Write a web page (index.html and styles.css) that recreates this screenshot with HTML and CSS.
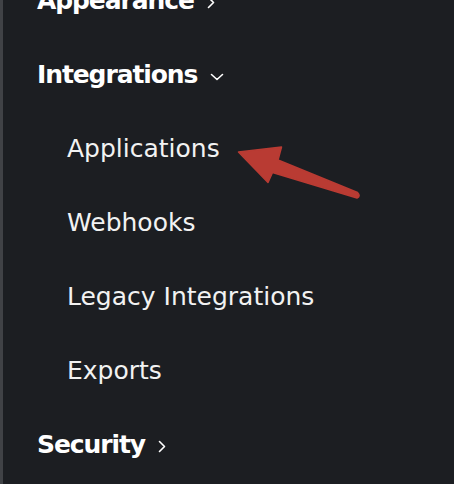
FILE: index.html
```html
<!DOCTYPE html>
<html lang="en">
<head>
<meta charset="utf-8">
<title>Settings navigation</title>
<link rel="stylesheet" href="styles.css">
</head>
<body>
<nav class="sidebar">
  <ul class="menu">
    <li class="item group">Appearance
      <svg class="chev-right" width="8" height="13" viewBox="0 0 8 13"><path d="M1.5 1.5 L6.5 6.5 L1.5 11.5" fill="none" stroke="#fff" stroke-width="1.6" stroke-linecap="round" stroke-linejoin="round"/></svg>
    </li>
    <li class="item group">Integrations
      <svg class="chev-down" width="14" height="8" viewBox="0 0 14 8"><path d="M1.5 1.5 L7 6.5 L12.5 1.5" fill="none" stroke="#fff" stroke-width="1.6" stroke-linecap="round" stroke-linejoin="round"/></svg>
    </li>
    <li class="item sub">Applications</li>
    <li class="item sub">Webhooks</li>
    <li class="item sub">Legacy Integrations</li>
    <li class="item sub">Exports</li>
    <li class="item group">Security
      <svg class="chev-right" width="8" height="13" viewBox="0 0 8 13"><path d="M1.5 1.5 L6.5 6.5 L1.5 11.5" fill="none" stroke="#fff" stroke-width="1.6" stroke-linecap="round" stroke-linejoin="round"/></svg>
    </li>
  </ul>
  <svg class="arrow" width="454" height="484" viewBox="0 0 454 484">
    <path d="M238.5 152 L281.5 147 L278 160 L357.5 192.5 Q361 196 357 198 L272.5 172.5 L268 182.5 Z" fill="#b93b33" stroke="#b93b33" stroke-width="1.5" stroke-linejoin="round"/>
  </svg>
</nav>
</body>
</html>
```
FILE: styles.css
```css
html, body {
  margin: 0;
  padding: 0;
  height: 100%;
  overflow: hidden;
  background: #1c1e22;
}
.sidebar {
  position: relative;
  display: flow-root;
  height: 100%;
  border-left: 3px solid #404246;
  box-sizing: border-box;
}
.menu {
  list-style: none;
  margin: -36px 0 0 0;
  padding: 0 0 0 34px;
  font-family: "DejaVu Sans", sans-serif;
  font-size: 25px;
}
.item {
  display: flex;
  align-items: center;
  height: 74px;
  line-height: 74px;
  white-space: nowrap;
}
.group {
  font-weight: 700;
  letter-spacing: -1.1px;
  color: #ffffff;
}
.sub {
  padding-left: 30px;
  color: #f2f2f2;
}
.chev-right {
  margin-left: 13px;
  margin-top: 2px;
}
.chev-down {
  margin-left: 13px;
  margin-top: 4px;
}
.arrow {
  position: absolute;
  left: -3px;
  top: 0;
  pointer-events: none;
}
```
